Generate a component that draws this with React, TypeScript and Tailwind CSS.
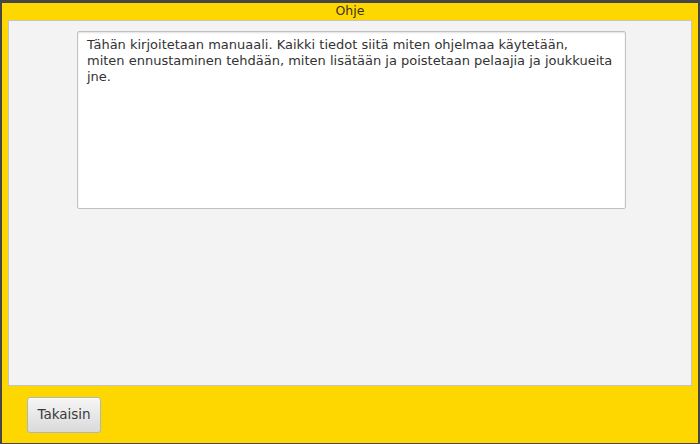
export default function App() {
  return (
    <div className="h-[444px] w-[700px] bg-[#464646] pt-[3px] pl-[2px] pr-[2px] pb-[1px] font-['DejaVu_Sans',sans-serif]">
      <div className="flex h-full w-full flex-col bg-[#ffd700]">
        <div className="flex h-[17px] items-center justify-center text-[12.5px] leading-none text-[#3a3220]">
          Ohje
        </div>
        <div className="mx-[6px] flex h-[366px] border border-[#c4c4c4] bg-[#f3f3f3] pl-[68px] pt-[10px]">
          <div className="h-[178px] w-[549px] rounded-[2px] border border-[#c2c2c2] bg-white px-[9px] py-[5px] text-[13px] leading-[16px] text-[#333] shadow-[inset_0_1px_2px_rgba(0,0,0,0.12)]">
            Tähän kirjoitetaan manuaali. Kaikki tiedot siitä miten ohjelmaa käytetään,
            <br />
            miten ennustaminen tehdään, miten lisätään ja poistetaan pelaajia ja joukkueita
            <br />
            jne.
          </div>
        </div>
        <div className="flex flex-1 items-center pl-[25px]">
          <button className="h-[36px] w-[74px] rounded-[3px] border border-[#b5b5b5] bg-gradient-to-b from-[#f6f6f6] to-[#dadada] text-[13.5px] text-[#3a3a3a] shadow-[inset_0_1px_0_rgba(255,255,255,0.8)]">
            Takaisin
          </button>
        </div>
      </div>
    </div>
  );
}
